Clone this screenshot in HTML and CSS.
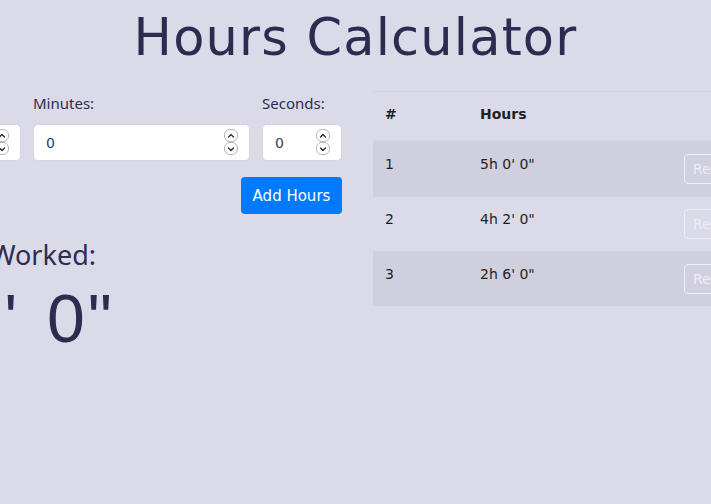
FILE: index.html
```html
<!DOCTYPE html>
<html lang="en">
<head>
<meta charset="utf-8">
<title>Hours Calculator</title>
<link rel="stylesheet" href="styles.css">
</head>
<body>
<h1 class="title">Hours Calculator</h1>
<div class="layout">
  <section class="left">
    <div class="fields">
      <div class="field field-hours">
        <label class="label" for="h">Hours:</label>
        <div class="input-wrap">
          <input class="input" id="h" type="number" value="0">
          <span class="spin"><span class="spin-btn"><svg viewBox="0 0 10 10"><path d="M2.5 6 L5 3.5 L7.5 6"/></svg></span><span class="spin-btn"><svg viewBox="0 0 10 10"><path d="M2.5 4 L5 6.5 L7.5 4"/></svg></span></span>
        </div>
      </div>
      <div class="field field-minutes">
        <label class="label" for="m">Minutes:</label>
        <div class="input-wrap">
          <input class="input" id="m" type="number" value="0">
          <span class="spin"><span class="spin-btn"><svg viewBox="0 0 10 10"><path d="M2.5 6 L5 3.5 L7.5 6"/></svg></span><span class="spin-btn"><svg viewBox="0 0 10 10"><path d="M2.5 4 L5 6.5 L7.5 4"/></svg></span></span>
        </div>
      </div>
      <div class="field field-seconds">
        <label class="label" for="s">Seconds:</label>
        <div class="input-wrap">
          <input class="input" id="s" type="number" value="0">
          <span class="spin"><span class="spin-btn"><svg viewBox="0 0 10 10"><path d="M2.5 6 L5 3.5 L7.5 6"/></svg></span><span class="spin-btn"><svg viewBox="0 0 10 10"><path d="M2.5 4 L5 6.5 L7.5 4"/></svg></span></span>
        </div>
      </div>
    </div>
    <div class="actions">
      <button class="add-btn" type="button">Add Hours</button>
    </div>
    <div class="total">
      <h2 class="total-label">Total Hours Worked:</h2>
      <div class="total-value">11h 8' 0"</div>
    </div>
  </section>
  <section class="right">
    <table class="hours-table">
      <thead>
        <tr><th class="c-num">#</th><th class="c-hours">Hours</th><th class="c-act"></th></tr>
      </thead>
      <tbody>
        <tr class="odd"><td>1</td><td>5h 0' 0"</td><td><button class="remove-btn" type="button">Remove</button></td></tr>
        <tr><td>2</td><td>4h 2' 0"</td><td><button class="remove-btn" type="button">Remove</button></td></tr>
        <tr class="odd"><td>3</td><td>2h 6' 0"</td><td><button class="remove-btn" type="button">Remove</button></td></tr>
      </tbody>
    </table>
  </section>
</div>
</body>
</html>
```
FILE: styles.css
```css
html, body {
  margin: 0;
  padding: 0;
  background: #dbdae9;
  overflow: hidden;
  width: 711px;
  height: 504px;
}
body {
  font-family: "Noto Sans", "DejaVu Sans", sans-serif;
  color: #2e2b51;
}
.title {
  margin: 0;
  padding-top: 8px;
  height: 83px;
  text-align: center;
  font-family: "DejaVu Sans", sans-serif;
  font-weight: normal;
  font-size: 51px;
  line-height: 60px;
  letter-spacing: 1.2px;
  color: #2e2b51;
}
.layout {
  display: flex;
  justify-content: center;
  gap: 31px;
  width: 711px;
}
.left {
  flex: 0 0 700px;
  width: 700px;
  display: flex;
  flex-direction: column;
}
.right {
  flex: 0 0 696px;
  width: 696px;
}
.fields {
  display: flex;
  justify-content: flex-end;
  gap: 12px;
}
.field {
  display: flex;
  flex-direction: column;
}
.field-hours { width: 165px; }
.field-minutes { width: 217px; }
.field-seconds { width: 80px; }
.label {
  font-size: 15px;
  line-height: 20px;
  padding-top: 2px;
  margin-bottom: 11px;
  color: #2e2b51;
}
.input-wrap {
  position: relative;
  height: 37px;
}
.input {
  box-sizing: border-box;
  height: 37px;
  width: 100%;
  border: 1px solid #d6d5df;
  border-radius: 5px;
  background: #fff;
  padding: 0 6px 0 12px;
  font-family: "DejaVu Sans", sans-serif;
  font-size: 14px;
  color: #3a3a55;
  -moz-appearance: textfield;
}
.input::-webkit-inner-spin-button,
.input::-webkit-outer-spin-button {
  -webkit-appearance: none;
  margin: 0;
}
.spin {
  position: absolute;
  right: 12px;
  top: 5px;
  display: flex;
  flex-direction: column;
}
.spin-btn {
  box-sizing: border-box;
  width: 14px;
  height: 13px;
  border: 1px solid #b9b6b0;
  border-radius: 6px;
  background: #fff;
  display: flex;
  align-items: center;
  justify-content: center;
}
.spin-btn svg {
  width: 10px;
  height: 10px;
  fill: none;
  stroke: #2a2a2a;
  stroke-width: 1.3;
  stroke-linecap: round;
  stroke-linejoin: round;
}
.actions {
  display: flex;
  justify-content: flex-end;
  margin-top: 16px;
}
.add-btn {
  width: 101px;
  height: 37px;
  border: none;
  border-radius: 4px;
  background: #007bff;
  color: #fff;
  font-family: "DejaVu Sans", sans-serif;
  font-size: 15px;
  padding: 0;
}
.total {
  width: 650px;
  text-align: center;
}
.total-label {
  margin: 24px 0 0;
  font-weight: normal;
  font-size: 27px;
  line-height: 34px;
  color: #2e2b51;
}
.total-value {
  margin-top: 6px;
  font-family: "Liberation Sans", Arial, sans-serif;
  font-size: 68px;
  line-height: 80px;
  letter-spacing: 3px;
  word-spacing: 5px;
  color: #2e2b51;
}
.hours-table {
  width: 484px;
  border-collapse: collapse;
  font-family: "DejaVu Sans", sans-serif;
  font-size: 14px;
  color: #1d1f24;
}
.hours-table th, .hours-table td {
  text-align: left;
  vertical-align: top;
  padding: 12px;
  border-top: 1px solid #d3d2e1;
  line-height: 21px;
}
.hours-table th {
  font-weight: bold;
  padding-top: 12px;
  padding-bottom: 14px;
  border-bottom: 2px solid #d3d2e1;
  height: 22px;
}
.hours-table td { font-weight: normal; }
.c-num { width: 71px; }
.c-hours { width: 180px; }
.odd td { background: #d0cfdd; }
.remove-btn {
  display: block;
  height: 30px;
  padding: 0 8px;
  border: 1px solid #eeedf4;
  border-radius: 4px;
  background: transparent;
  color: #eeedf4;
  font-family: "DejaVu Sans", sans-serif;
  font-size: 14px;
  margin: 0;
}
```
